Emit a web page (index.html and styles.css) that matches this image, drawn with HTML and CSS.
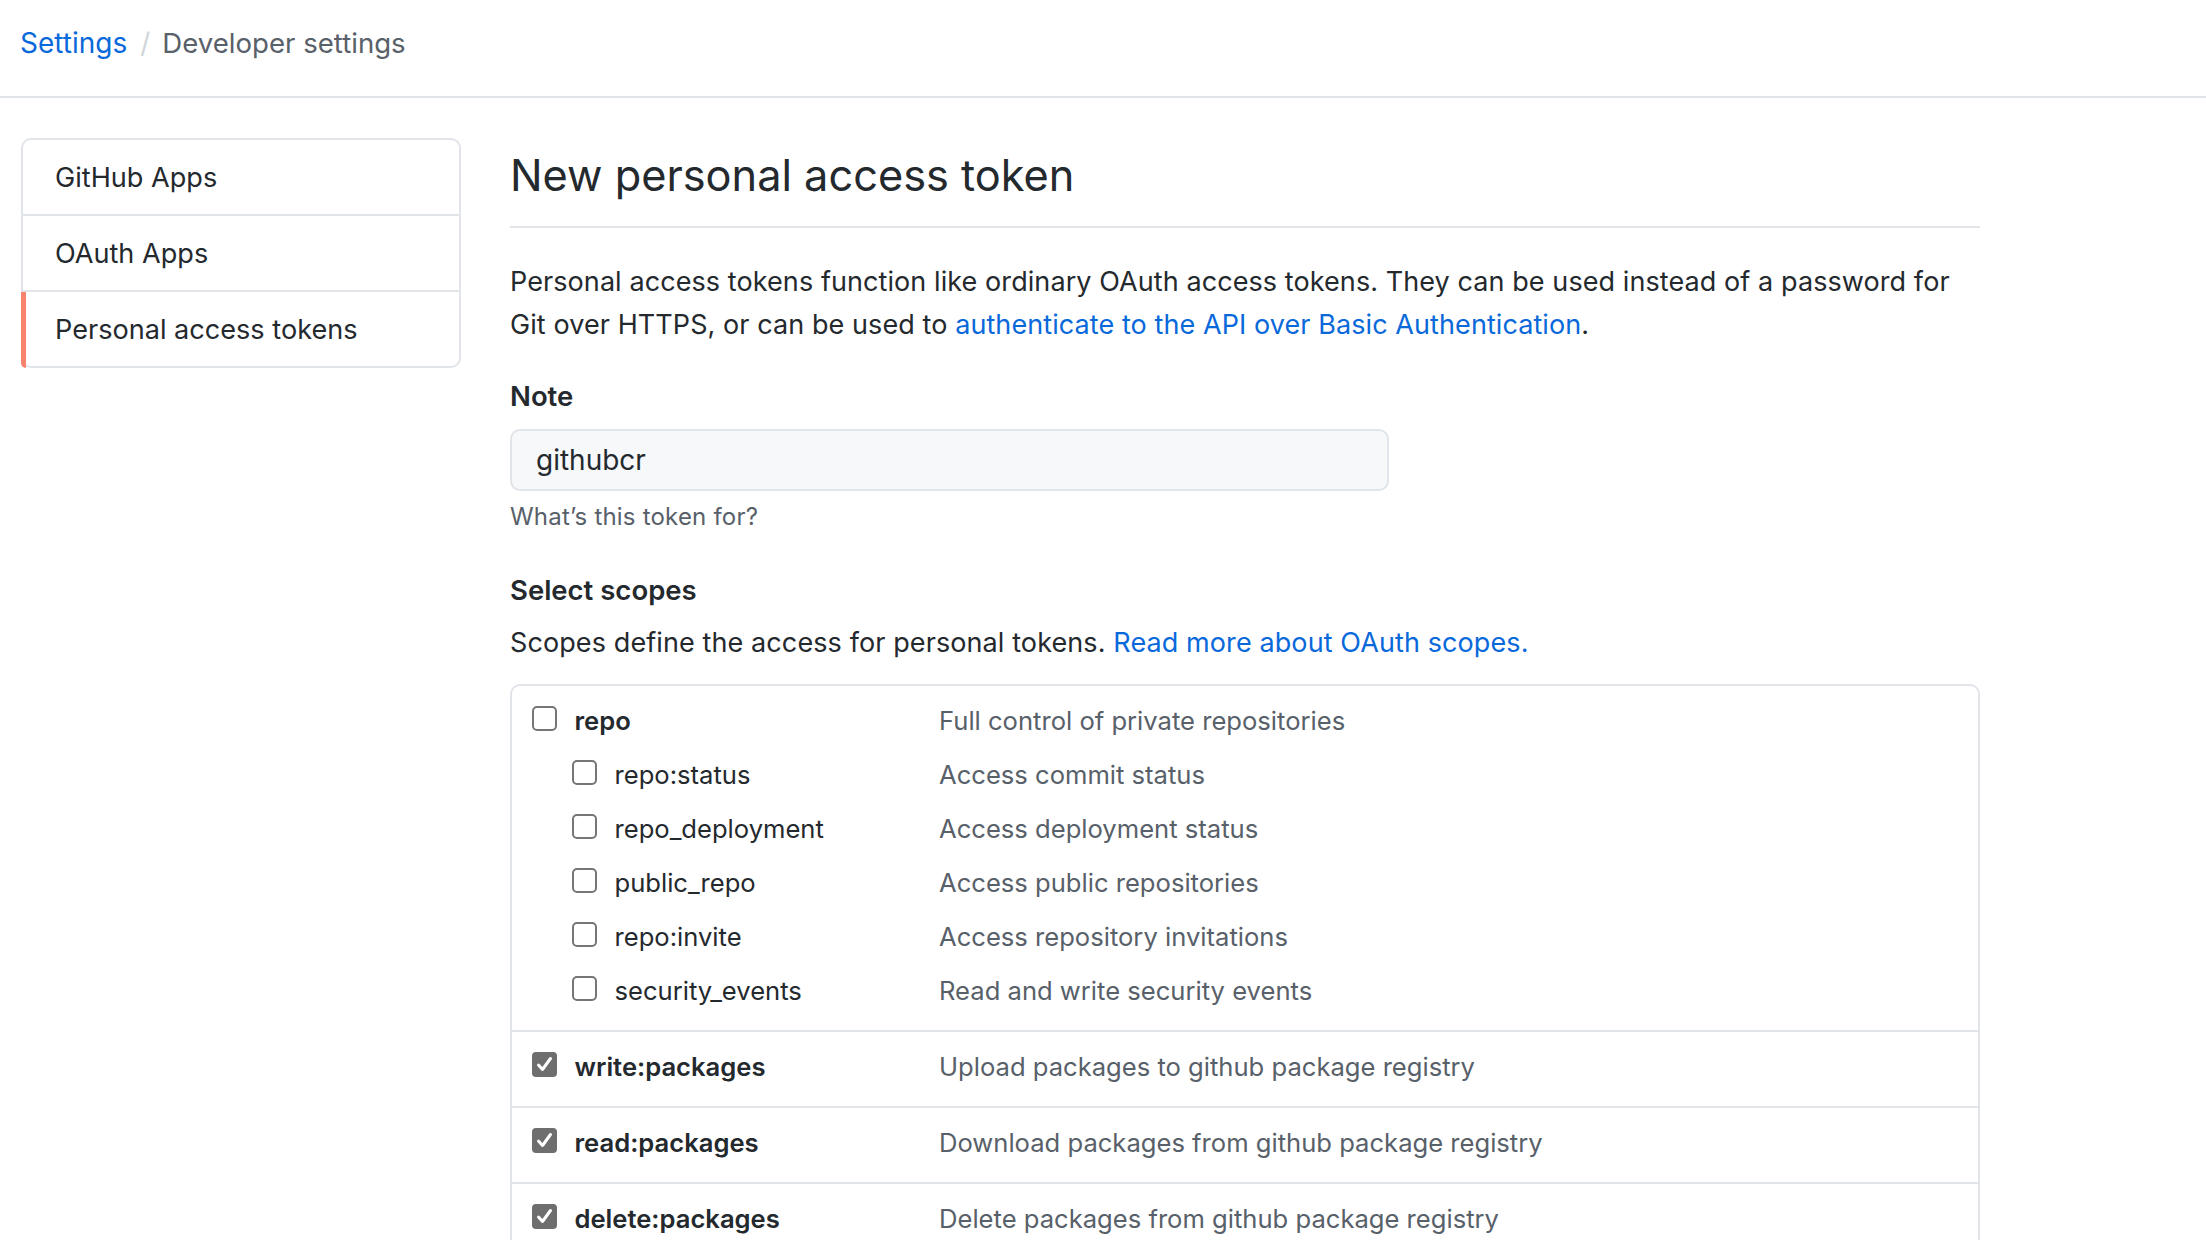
FILE: index.html
```html
<!DOCTYPE html>
<html lang="en">
<head>
<meta charset="utf-8">
<title>New personal access token</title>
<link rel="stylesheet" href="styles.css">
</head>
<body>
<header class="topbar">
  <nav class="breadcrumb">
    <a class="crumb-link" href="#">Settings</a>
    <span class="crumb-sep">/</span>
    <span class="crumb-current">Developer settings</span>
  </nav>
</header>

<div class="layout">
  <aside class="sidebar">
    <a class="side-item" href="#">GitHub Apps</a>
    <a class="side-item" href="#">OAuth Apps</a>
    <a class="side-item active" href="#">Personal access tokens</a>
  </aside>

  <main class="content">
    <div class="subhead">
      <h1 class="subhead-title">New personal access token</h1>
    </div>

    <p class="intro">Personal access tokens function like ordinary OAuth access tokens. They can be used instead of a password for Git over HTTPS, or can be used to <a href="#">authenticate to the API over Basic Authentication</a>.</p>

    <label class="field-label" for="note">Note</label>
    <input class="note-input" id="note" type="text" value="githubcr">
    <p class="hint">What’s this token for?</p>

    <h3 class="section-title">Select scopes</h3>
    <p class="scopes-text">Scopes define the access for personal tokens. <a href="#">Read more about OAuth scopes.</a></p>

    <div class="scope-box">
      <div class="scope-group">
        <div class="scope-row main">
          <div class="scope-key"><span class="cb"></span><span class="name">repo</span></div>
          <span class="desc">Full control of private repositories</span>
        </div>
        <div class="scope-row sub">
          <div class="scope-key"><span class="cb"></span><span class="name">repo:status</span></div>
          <span class="desc">Access commit status</span>
        </div>
        <div class="scope-row sub">
          <div class="scope-key"><span class="cb"></span><span class="name">repo_deployment</span></div>
          <span class="desc">Access deployment status</span>
        </div>
        <div class="scope-row sub">
          <div class="scope-key"><span class="cb"></span><span class="name">public_repo</span></div>
          <span class="desc">Access public repositories</span>
        </div>
        <div class="scope-row sub">
          <div class="scope-key"><span class="cb"></span><span class="name">repo:invite</span></div>
          <span class="desc">Access repository invitations</span>
        </div>
        <div class="scope-row sub">
          <div class="scope-key"><span class="cb"></span><span class="name">security_events</span></div>
          <span class="desc">Read and write security events</span>
        </div>
      </div>

      <div class="scope-group">
        <div class="scope-row main">
          <div class="scope-key"><span class="cb checked"><svg viewBox="0 0 25 25" width="25" height="25"><path d="M6.5 13 L10.5 17.5 L18.5 6.5" fill="none" stroke="#fff" stroke-width="3" stroke-linecap="round" stroke-linejoin="round"/></svg></span><span class="name">write:packages</span></div>
          <span class="desc">Upload packages to github package registry</span>
        </div>
      </div>

      <div class="scope-group">
        <div class="scope-row main">
          <div class="scope-key"><span class="cb checked"><svg viewBox="0 0 25 25" width="25" height="25"><path d="M6.5 13 L10.5 17.5 L18.5 6.5" fill="none" stroke="#fff" stroke-width="3" stroke-linecap="round" stroke-linejoin="round"/></svg></span><span class="name">read:packages</span></div>
          <span class="desc">Download packages from github package registry</span>
        </div>
      </div>

      <div class="scope-group">
        <div class="scope-row main">
          <div class="scope-key"><span class="cb checked"><svg viewBox="0 0 25 25" width="25" height="25"><path d="M6.5 13 L10.5 17.5 L18.5 6.5" fill="none" stroke="#fff" stroke-width="3" stroke-linecap="round" stroke-linejoin="round"/></svg></span><span class="name">delete:packages</span></div>
          <span class="desc">Delete packages from github package registry</span>
        </div>
      </div>

      <div class="scope-group">
        <div class="scope-row main">
          <div class="scope-key"><span class="cb"></span><span class="name">admin:org</span></div>
          <span class="desc">Full control of orgs and teams, read and write org projects</span>
        </div>
      </div>
    </div>
  </main>
</div>
</body>
</html>
```

FILE: styles.css
```css
html, body {
  margin: 0;
  padding: 0;
  background: #ffffff;
}

body {
  font-family: Inter, "Liberation Sans", Arial, sans-serif;
  color: #24292e;
}

a {
  color: #0969da;
  text-decoration: none;
}

/* ---------- top breadcrumb bar ---------- */
.topbar {
  box-sizing: border-box;
  height: 98px;
  padding: 27px 20px 0;
  border-bottom: 2px solid #e1e4e8;
}

.breadcrumb {
  display: flex;
  align-items: baseline;
  font-size: 28px;
  line-height: 1.2;
}

.crumb-sep {
  color: #d1d5da;
  margin: 0 12px 0 13px;
}

.crumb-current {
  color: #586069;
  font-size: 27.6px;
}

/* ---------- page layout ---------- */
.layout {
  display: flex;
  align-items: flex-start;
  gap: 49px;
  padding: 40px 0 0 21px;
}

/* ---------- sidebar ---------- */
.sidebar {
  flex: none;
  box-sizing: border-box;
  width: 440px;
  border: 2px solid #e1e4e8;
  border-radius: 10px;
  display: flex;
  flex-direction: column;
}

.side-item {
  position: relative;
  display: block;
  height: 74px;
  line-height: 76px;
  padding-left: 32px;
  font-size: 27.1px;
  color: #24292e;
}

.side-item + .side-item {
  border-top: 2px solid #e1e4e8;
}

.side-item.active::before {
  content: "";
  position: absolute;
  left: -2px;
  top: 0;
  bottom: -2px;
  width: 5px;
  background: #f9826c;
  border-bottom-left-radius: 10px;
}

/* ---------- main content ---------- */
.content {
  flex: none;
  width: 1470px;
}

.subhead {
  padding: 10px 0 23px;
  border-bottom: 2px solid #e1e4e8;
}

.subhead-title {
  margin: 0;
  font-size: 43.3px;
  line-height: 55px;
  font-weight: 400;
}

.intro,
.scopes-text {
  margin: 32px 0 0;
  font-size: 27px;
  line-height: 43px;
}

.intro {
  letter-spacing: 0.08px;
}

.scopes-text {
  margin-top: 11px;
  letter-spacing: 0.1px;
}

.field-label {
  display: block;
  margin-top: 30px;
  font-size: 27.5px;
  line-height: 40px;
  font-weight: 600;
}

.note-input {
  display: block;
  box-sizing: border-box;
  margin-top: 13px;
  width: 879px;
  height: 62px;
  padding: 0 24px;
  border: 2px solid #e1e4e8;
  border-radius: 10px;
  background: #f6f8fa;
  font-family: Inter, "Liberation Sans", Arial, sans-serif;
  font-size: 28px;
  color: #24292e;
  outline: none;
}

.hint {
  margin: 8px 0 0;
  font-size: 24px;
  line-height: 36px;
  color: #586069;
  letter-spacing: 0.2px;
}

.section-title {
  margin: 35px 0 0;
  font-size: 27.5px;
  line-height: 40px;
  font-weight: 600;
}

/* ---------- scopes table ---------- */
.scope-box {
  margin-top: 20px;
  border: 2px solid #e1e4e8;
  border-radius: 10px;
}

.scope-group {
  padding: 8px 0 12px;
}

.scope-group + .scope-group {
  border-top: 2px solid #e1e4e8;
}

.scope-row {
  display: flex;
  height: 54px;
  line-height: 54px;
  font-size: 25.6px;
}

.scope-key {
  flex: none;
  box-sizing: border-box;
  width: 427px;
  padding-left: 20px;
  display: flex;
  align-items: flex-start;
}

.scope-row.sub .scope-key {
  padding-left: 60px;
}

.cb {
  flex: none;
  box-sizing: border-box;
  width: 25px;
  height: 25px;
  margin-top: 11.5px;
  margin-right: 17.5px;
  border: 2px solid #767676;
  border-radius: 5px;
  background: #ffffff;
}

.cb.checked {
  border: none;
  border-radius: 4px;
  background: #6e6e6e;
}

.cb svg {
  display: block;
}

.scope-row.main .name {
  font-weight: 600;
}

.desc {
  color: #586069;
}
```
